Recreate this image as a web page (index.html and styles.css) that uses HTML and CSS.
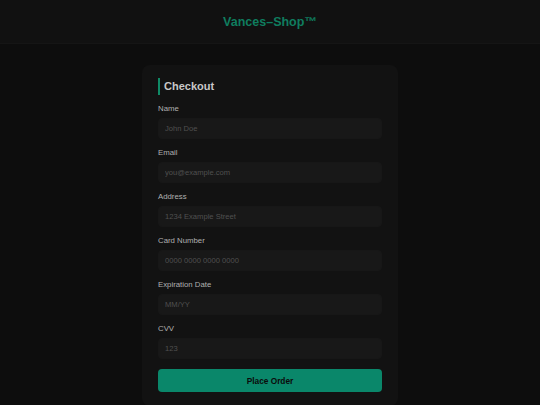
FILE: index.html
```html
<!DOCTYPE html>
<html lang="en">

<head>
  <meta charset="UTF-8">
  <meta name="viewport" content="width=device-width, initial-scale=1">
  <title>Vances-Shop Checkout</title>
  <link rel="stylesheet" href="styles.css">
</head>

<body>
  <header class="topbar">
    <h1 class="brand">Vances&ndash;Shop&trade;</h1>
  </header>

  <main class="page">
    <section class="card">
      <h2 class="card-title">Checkout</h2>
      <form class="checkout" onsubmit="event.preventDefault();">
        <div class="field">
          <label for="name">Name</label>
          <input type="text" id="name" placeholder="John Doe">
        </div>
        <div class="field">
          <label for="email">Email</label>
          <input type="email" id="email" placeholder="you@example.com">
        </div>
        <div class="field">
          <label for="address">Address</label>
          <input type="text" id="address" placeholder="1234 Example Street">
        </div>
        <div class="field">
          <label for="card">Card Number</label>
          <input type="text" id="card" placeholder="0000 0000 0000 0000">
        </div>
        <div class="field">
          <label for="exp">Expiration Date</label>
          <input type="text" id="exp" placeholder="MM/YY">
        </div>
        <div class="field">
          <label for="cvv">CVV</label>
          <input type="text" id="cvv" placeholder="123">
        </div>
        <button type="submit" class="order-btn">Place Order</button>
      </form>
    </section>
  </main>
</body>
</html>
```

FILE: styles.css
```css
body {
    margin: 0;
    padding: 0;
    background-color: #0d0d0d;
    color: #ccc;
    font-family: "Liberation Sans", Arial, sans-serif;
}

.topbar {
    height: 43px;
    background-color: #111;
    border-bottom: 1px solid #151515;
    display: flex;
    align-items: center;
    justify-content: center;
}

.brand {
    margin: 0;
    font-size: 12.5px;
    font-weight: bold;
    color: #0f7d5f;
}

.page {
    display: flex;
    justify-content: center;
    padding-top: 21px;
}

.card {
    width: 224px;
    background-color: #121212;
    border-radius: 8px;
    padding: 13px 16px 14px;
}

.card-title {
    margin: 0 0 8px;
    border-left: 2px solid #0f8a66;
    padding: 3px 0 3px 4px;
    font-size: 11px;
    line-height: 11px;
    color: #c8c8c8;
}

.field {
    display: flex;
    flex-direction: column;
    margin-bottom: 8px;
}

.field label {
    font-size: 7.8px;
    line-height: 11px;
    color: #b0b0b0;
    margin-bottom: 4px;
}

.field input {
    height: 21px;
    box-sizing: border-box;
    border: 1px solid #171717;
    border-radius: 4px;
    background-color: #181818;
    padding: 0 6px;
    font-family: "Liberation Sans", Arial, sans-serif;
    font-size: 7.6px;
    color: #ccc;
    outline: none;
}

.field input::placeholder {
    color: #505050;
}

.order-btn {
    width: 100%;
    height: 23px;
    margin-top: 2px;
    border: none;
    border-radius: 4px;
    background-color: #0a876a;
    color: #0b0b0b;
    font-family: "Liberation Sans", Arial, sans-serif;
    font-size: 8.3px;
    font-weight: bold;
    cursor: pointer;
}
```
